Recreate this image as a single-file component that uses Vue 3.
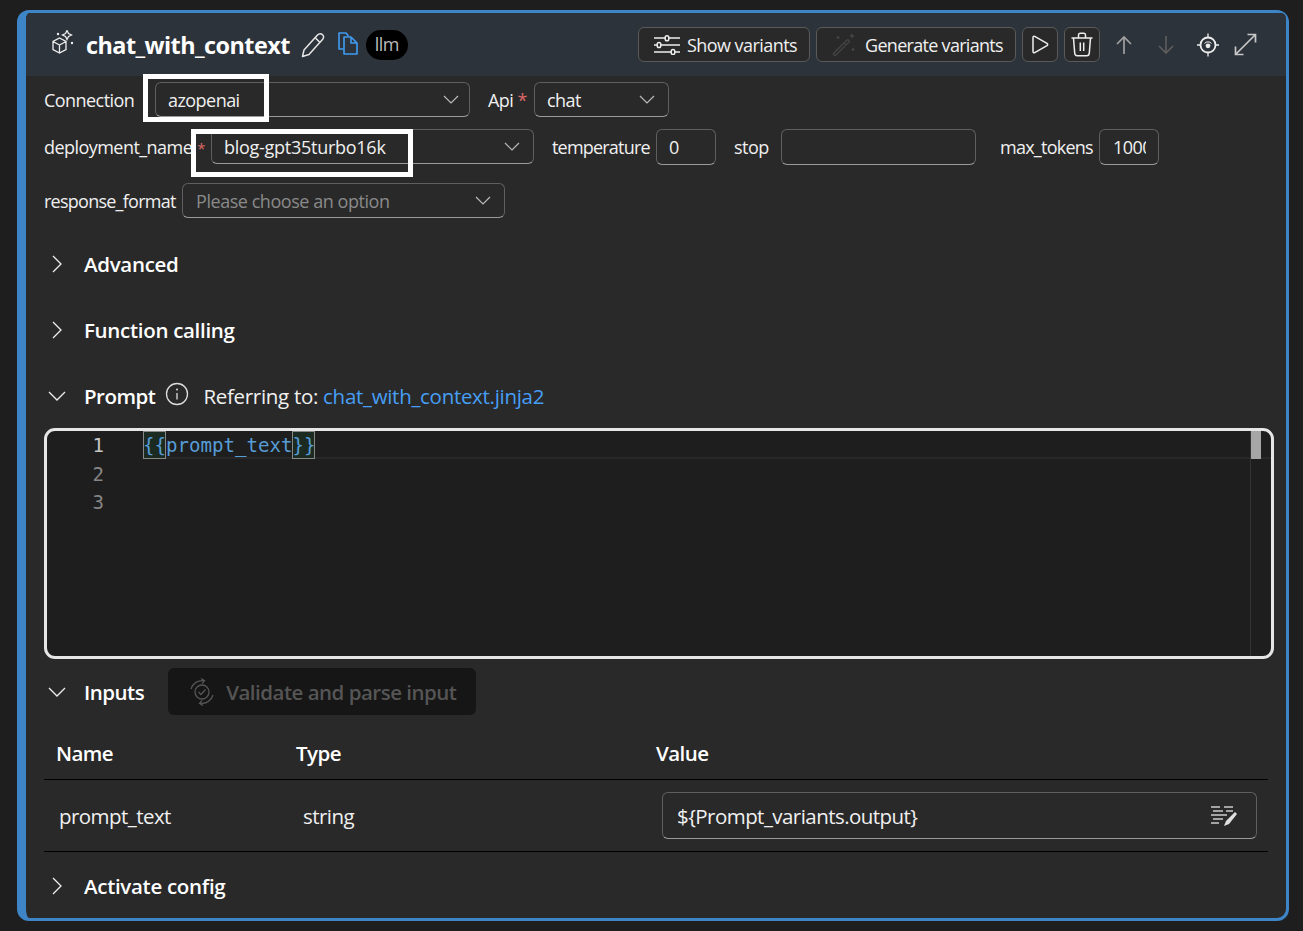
<template>
  <div class="page">
    <div class="card">
      <header class="head">
        <svg class="node-icon" width="26" height="26" viewBox="0 0 26 26" fill="none" stroke="#eee" stroke-width="1.300">
          <path d="M8.500 8L15 11.500v8L8.500 23 2 19.500v-8zM2 11.500l6.500 3.500 6.500-3.500M8.500 15v8" />
          <path d="M16 .5l1.500 3 3 1.500-3 1.500-1.500 3-1.500-3-3-1.500 3-1.500z" />
          <circle cx="7" cy="4" r="1.200" fill="#eee" stroke="none" />
          <circle cx="21" cy="13" r="1.200" fill="#eee" stroke="none" />
        </svg>
        <span class="title">chat_with_context</span>
        <svg class="edit" width="24" height="26" viewBox="0 0 24 26" fill="none" stroke="#e6e6e6" stroke-width="1.500" stroke-linejoin="round">
          <path d="M1.500 24.500l1.500-6.500L16.500 3c1.500-1.500 3.500-1.500 5-.3 1.500 1.300 1.400 3.300 0 4.800L8 22.500zM14 5.500l5 5" />
        </svg>
        <svg class="copy" width="20" height="23" viewBox="0 0 20 23" fill="none" stroke="#3f9cf2" stroke-width="1.600" stroke-linejoin="round">
          <path d="M5.500 17H1V1h7l2.500 3" />
          <path d="M6 5h7l6 6v11H6zM13 5v6h6" />
        </svg>
        <span class="tag">llm</span>
        <div class="head-actions">
          <button class="btn show">
            <svg width="26" height="20" viewBox="0 0 26 20" fill="none" stroke="#eee" stroke-width="1.500">
              <path d="M0 3h26M0 10h26M0 17h26" />
              <rect x="11.200" y=".8" width="3.600" height="5" rx="1.800" fill="#292929" />
              <rect x="3.200" y="7.500" width="3.600" height="5" rx="1.800" fill="#292929" />
              <rect x="17.200" y="14.500" width="3.600" height="5" rx="1.800" fill="#292929" />
            </svg>
            Show variants
          </button>
          <button class="btn wand-btn">
            <svg width="24" height="24" viewBox="0 0 24 24" fill="none" stroke="#444" stroke-width="1.400">
              <path d="M1.500 20.500c-.5 1 1 2.500 2 2L17 9c1-1-1-3-2-2zM12 10l2.500 2.500M20 1v4M18 3h4M21 15v3M19.500 16.500h3M6 3v3M4.500 4.500h3" />
            </svg>
            Generate variants
          </button>
          <button class="btn square">
            <svg width="17" height="19" viewBox="0 0 17 19" fill="none" stroke="#eee" stroke-width="1.500" stroke-linejoin="round">
              <path d="M1 2.500c0-1 .8-1.600 1.700-1.100L15 8.300c.9.600.9 1.800 0 2.400L2.700 17.600c-.9.500-1.700-.1-1.700-1.100z" />
            </svg>
          </button>
          <button class="btn square">
            <svg width="22" height="25" viewBox="0 0 22 25" fill="none" stroke="#eee" stroke-width="1.500">
              <path d="M.5 6h21M7.500 6V3c0-1 .7-1.800 1.500-1.800h4c.8 0 1.500.8 1.500 1.800v3M2.500 6l1.200 15c.1 1.500 1 2.800 2.500 2.800h9.600c1.500 0 2.400-1.300 2.500-2.800l1.200-15M9.300 10.500v8.500M12.700 10.500v8.500" />
            </svg>
          </button>
          <svg class="plain up" width="18" height="20" viewBox="0 0 18 20" fill="none" stroke="#a0a0a0" stroke-width="1.700">
            <path d="M9 19V2M2 9l7-7 7 7" />
          </svg>
          <svg class="plain down" width="18" height="20" viewBox="0 0 18 20" fill="none" stroke="#5c5c5c" stroke-width="1.700">
            <path d="M9 1v17M2 11l7 7 7-7" />
          </svg>
          <svg class="plain target" width="22" height="24" viewBox="0 0 22 24" fill="none" stroke="#eee" stroke-width="1.800">
            <circle cx="11" cy="12" r="7.500" />
            <circle cx="11" cy="12.800" r="2.400" fill="#eee" stroke="none" />
            <path d="M7.500 10.500a4.500 4.500 0 0 1 7 0" stroke-width="1" />
            <path d="M11 .5v4M11 19.500v4M0 12h3.500M18.500 12h3.500" stroke-width="1.300" />
          </svg>
          <svg class="plain expand" width="23" height="23" viewBox="0 0 23 23" fill="none" stroke="#c8c8c8" stroke-width="1.700">
            <path d="M2 21L21 2M13.500 1.500h8v8M1.500 13.500v8h8" />
          </svg>
        </div>
      </header>

      <div class="body">
        <div class="fields f1">
          <label class="conn-label">Connection</label>
          <div class="select conn"><span>azopenai</span><svg class="chev" viewBox="0 0 16 9"><path d="M1 1l7 7 7-7" /></svg></div>
          <label class="api">Api <i>*</i></label>
          <div class="select api-sel"><span>chat</span><svg class="chev" viewBox="0 0 16 9"><path d="M1 1l7 7 7-7" /></svg></div>
        </div>
        <div class="fields f2">
          <label class="dep-label">deployment_name <i class="req">*</i></label>
          <div class="select dep"><span>blog-gpt35turbo16k</span><svg class="chev" viewBox="0 0 16 9"><path d="M1 1l7 7 7-7" /></svg></div>
          <label class="temp">temperature</label>
          <div class="input w60"><span>0</span></div>
          <label class="stop">stop</label>
          <div class="input w195"></div>
          <label class="max">max_tokens</label>
          <div class="input w60 clip"><span>1000</span></div>
        </div>
        <div class="fields f3">
          <label class="resp-label">response_format</label>
          <div class="select resp"><span class="ph">Please choose an option</span><svg class="chev" viewBox="0 0 16 9"><path d="M1 1l7 7 7-7" /></svg></div>
        </div>

        <div class="section s-adv"><svg class="caret" viewBox="0 0 12 20"><path d="M2 2l8 8-8 8" /></svg><b>Advanced</b></div>
        <div class="section s-fn"><svg class="caret" viewBox="0 0 12 20"><path d="M2 2l8 8-8 8" /></svg><b>Function calling</b></div>
        <div class="section s-prompt">
          <svg class="caret open" viewBox="0 0 20 12"><path d="M2 2l8 8 8-8" /></svg><b>Prompt</b>
          <svg class="info" width="24" height="24" viewBox="0 0 24 24" fill="none" stroke="#ddd" stroke-width="1.300">
            <circle cx="12" cy="12" r="10.500" />
            <path d="M12 11v6.500" />
            <circle cx="12" cy="7.500" r="1" fill="#ddd" stroke="none" />
          </svg>
          <span class="ref">Referring to: <a>chat_with_context.jinja2</a></span>
        </div>

        <div class="editor">
          <div class="gutter">
            <div v-for="n in 3" :key="n" :class="{ cur: n === 1 }">{{ n }}</div>
          </div>
          <div class="code">
            <div class="line"><span class="br">&#123;&#123;</span>prompt_text<span class="br">&#125;&#125;</span></div>
          </div>
          <div class="minimap"><div class="thumb"></div></div>
        </div>

        <div class="section s-inputs">
          <svg class="caret open" viewBox="0 0 20 12"><path d="M2 2l8 8 8-8" /></svg><b>Inputs</b>
          <div class="validate">
            <svg width="26" height="28" viewBox="0 0 26 28" fill="none" stroke="#555" stroke-width="1.300">
              <path d="M2 11A11.500 11.500 0 0 1 15 2.700M24 17A11.500 11.500 0 0 1 11 25.300M12 .5l3.500 2.200-2.500 3M14 27.500l-3.500-2.200 2.500-3" />
              <circle cx="13" cy="14" r="7" />
              <path d="M9.500 14l2.500 2.500 4.500-5" />
            </svg>
            Validate and parse input
          </div>
        </div>

        <div class="table">
          <div class="tr th"><span class="c1">Name</span><span class="c2">Type</span><span class="c3">Value</span></div>
          <div class="tr td">
            <span class="c1">prompt_text</span><span class="c2">string</span>
            <div class="value">
              <span>${Prompt_variants.output}</span>
              <svg width="28" height="22" viewBox="0 0 28 22" fill="none" stroke="#ccc" stroke-width="1.300">
                <path d="M1 2h9M14 2h9M3 6h10M16 6h7M1 10h16M3 14h10M1 18h8" />
                <path d="M27 9l-2-2-9 9-2 5 5-2z" fill="#e0e0e0" stroke="none" />
              </svg>
            </div>
          </div>
        </div>

        <div class="section s-act"><svg class="caret" viewBox="0 0 12 20"><path d="M2 2l8 8-8 8" /></svg><b>Activate config</b></div>
      </div>

      <div class="mark m1"></div>
      <div class="mark m2"></div>
    </div>
  </div>
</template>

<script setup>
</script>

<style>
html,
body {
  background: #1e1e1e;
}
</style>

<style scoped>
.page {
  height: 931px;
  padding: 10px 14px 10px 17px;
  box-sizing: border-box;
  background: #1e1e1e;
  font-family: "Open Sans", "Noto Sans", sans-serif;
  font-size: 18px;
  color: #f0f0f0;
  letter-spacing: -0.55px;
  overflow: hidden;
}
.card {
  height: 911px;
  box-sizing: border-box;
  background: #292929;
  border: 3px solid #3d85c6;
  border-left-width: 9px;
  border-radius: 12px;
  position: relative;
}
.head {
  height: 63px;
  background: #2d333b;
  border-radius: 5px 5px 0 0;
  display: flex;
  align-items: center;
  padding-left: 25px;
  box-sizing: border-box;
}
.node-icon {
  margin-top: -4px;
}
.title {
  font-weight: 700;
  font-size: 23.400px;
  color: #fff;
  margin-left: 9px;
  letter-spacing: -0.55px;
}
.edit {
  margin-left: 11px;
}
.copy {
  margin-left: 13px;
  margin-top: -2px;
}
.tag {
  background: #000;
  color: #bbb;
  border-radius: 15px;
  height: 30px;
  line-height: 29px;
  padding: 0 9px;
  margin-left: 8px;
  box-sizing: border-box;
}
.head-actions {
  margin-left: auto;
  display: flex;
  align-items: center;
  padding-right: 29px;
}
.btn {
  display: flex;
  align-items: center;
  font: inherit;
  letter-spacing: inherit;
  height: 35px;
  color: #f0f0f0;
  background: #292929;
  border: 1px solid #5a5a5a;
  border-radius: 6px;
  padding: 0 0 0 15px;
  gap: 7px;
  margin-right: 6px;
  box-sizing: border-box;
  white-space: nowrap;
}
.show {
  width: 172px;
}
.wand-btn {
  gap: 9px;
  width: 200px;
  letter-spacing: -0.7px;
}
.btn.square {
  width: 36px;
  padding: 0;
  justify-content: center;
}
.plain {
  display: block;
}
.up {
  margin-left: 9px;
}
.down {
  margin-left: 24px;
}
.target {
  margin-left: 22px;
}
.expand {
  margin-left: 15px;
}
.body {
  padding: 0 18px 0 18px;
}
.fields {
  display: flex;
  align-items: center;
  white-space: nowrap;
}
.fields i {
  color: #d66;
  font-style: normal;
}
.f1 {
  margin-top: 6px;
}
.f2 {
  margin-top: 12px;
}
.f3 {
  margin-top: 18px;
}
.select,
.input {
  height: 35px;
  box-sizing: border-box;
  border: 1px solid #5f5f5f;
  border-bottom-color: #9a9a9a;
  border-radius: 6px;
  display: flex;
  align-items: center;
  padding-left: 12px;
  position: relative;
}
.input {
  height: 36px;
}
.f2 .select {
  align-self: flex-start;
}
.chev {
  position: absolute;
  right: 13px;
  top: 12px;
  width: 16px;
  height: 9px;
  fill: none;
  stroke: #bbb;
  stroke-width: 1.200;
}
.conn-label {
  width: 91px;
}
.conn {
  width: 315px;
  margin-left: 20px;
}
.conn .chev {
  right: 10px;
}
.api {
  width: 40px;
  margin-left: 18px;
}
.api-sel {
  width: 135px;
  margin-left: 6px;
}
.dep-label {
  width: 161px;
}
.req {
  font-size: 15px;
  margin-left: 1px;
}
.dep {
  width: 323px;
  margin-left: 6px;
  letter-spacing: -0.27px;
}
.temp {
  width: 98px;
  margin-left: 18px;
  letter-spacing: -0.8px;
}
.w60 {
  width: 60px;
  margin-left: 6px;
}
.stop {
  width: 35px;
  margin-left: 18px;
}
.w195 {
  width: 195px;
  margin-left: 12px;
}
.max {
  width: 93px;
  margin-left: 24px;
  letter-spacing: -0.75px;
}
.clip span {
  width: 33px;
  overflow: hidden;
}
.clip {
  padding-left: 13px;
}
.resp-label {
  width: 132px;
  letter-spacing: -0.75px;
}
.resp {
  width: 323px;
  margin-left: 6px;
  padding-left: 13px;
}
.ph {
  color: #8a8a8a;
  letter-spacing: -0.45px;
}
.section {
  display: flex;
  align-items: center;
  height: 32px;
  font-weight: 600;
  font-size: 20.500px;
  color: #fff;
  letter-spacing: -0.3px;
}
.section b {
  font-weight: 600;
}
.caret {
  width: 12px;
  height: 20px;
  fill: none;
  stroke: #eee;
  stroke-width: 1.300;
  margin: 0 21px 0 7px;
}
.caret.open {
  width: 20px;
  height: 12px;
  margin: 0 17px 0 3px;
}
.s-adv {
  margin-top: 30px;
}
.s-fn {
  margin-top: 34px;
}
.s-prompt {
  margin-top: 34px;
}
.s-prompt b,
.s-inputs b,
.validate {
  letter-spacing: -0.5px;
}
.info {
  margin-left: 10px;
  margin-top: -4px;
}
.ref {
  font-weight: 400;
  margin-left: 14px;
  color: #f0f0f0;
}
.ref a {
  color: #479ef5;
}
.editor {
  margin-top: 16px;
  height: 231px;
  box-sizing: border-box;
  border: 3px solid #e6e6e6;
  border-radius: 11px;
  background: #1e1e1e;
  display: flex;
  position: relative;
  margin-right: -6px;
  font-family: "DejaVu Sans Mono", monospace;
  font-size: 19.100px;
  letter-spacing: 0;
  overflow: hidden;
}
.gutter {
  width: 96px;
  flex: none;
  box-sizing: border-box;
  padding-right: 39px;
  padding-top: 1px;
  text-align: right;
  color: #858585;
  line-height: 28.500px;
}
.gutter .cur {
  color: #c6c6c6;
}
.code {
  flex: 1;
  color: #569cd6;
  line-height: 30px;
}
.line {
  height: 28px;
  box-sizing: border-box;
  border-bottom: 2px solid #282828;
  margin-right: -21px;
}
.br {
  background: #1b2b22;
  outline: 1px solid #888;
  outline-offset: -1px;
  display: inline-block;
  height: 28px;
}
.minimap {
  width: 21px;
  box-sizing: border-box;
  border-left: 1px solid #333;
  flex: none;
  position: relative;
}
.thumb {
  width: 10px;
  height: 28px;
  background: #a6a6a6;
}
.s-inputs {
  margin-top: 9px;
  height: 47px;
}
.validate {
  margin-left: 24px;
  width: 308px;
  height: 47px;
  background: #161616;
  border-radius: 6px;
  display: flex;
  align-items: center;
  gap: 11px;
  padding-left: 21px;
  box-sizing: border-box;
  font-weight: 600;
  color: #555;
}
.table {
  margin-top: 16px;
  font-size: 20.500px;
}
.tr {
  display: flex;
  align-items: center;
  border-bottom: 1px solid #000;
}
.th {
  padding-bottom: 4px;
  box-sizing: border-box;
  height: 49px;
  font-weight: 600;
  color: #fff;
}
.td {
  height: 71px;
}
.c1 {
  width: 252px;
  padding-left: 12px;
  box-sizing: border-box;
}
.c2 {
  width: 360px;
}
.c3 {
  flex: 1;
}
.td .c1 {
  padding-left: 15px;
}
.td .c2 {
  padding-left: 7px;
  box-sizing: border-box;
  width: 360px;
}
.value {
  margin-left: 6px;
  width: 595px;
  height: 47px;
  box-sizing: border-box;
  border: 1px solid #5f5f5f;
  border-bottom-color: #9a9a9a;
  border-radius: 6px;
  display: flex;
  align-items: center;
  justify-content: space-between;
  padding: 0 18px 0 14px;
}
.s-act {
  margin-top: 18px;
}
.mark {
  position: absolute;
  border: 5px solid #fff;
  box-sizing: border-box;
  pointer-events: none;
}
.m1 {
  left: 117px;
  top: 61px;
  width: 126px;
  height: 48px;
}
.m2 {
  left: 165px;
  top: 116px;
  width: 222px;
  height: 48px;
}
</style>
